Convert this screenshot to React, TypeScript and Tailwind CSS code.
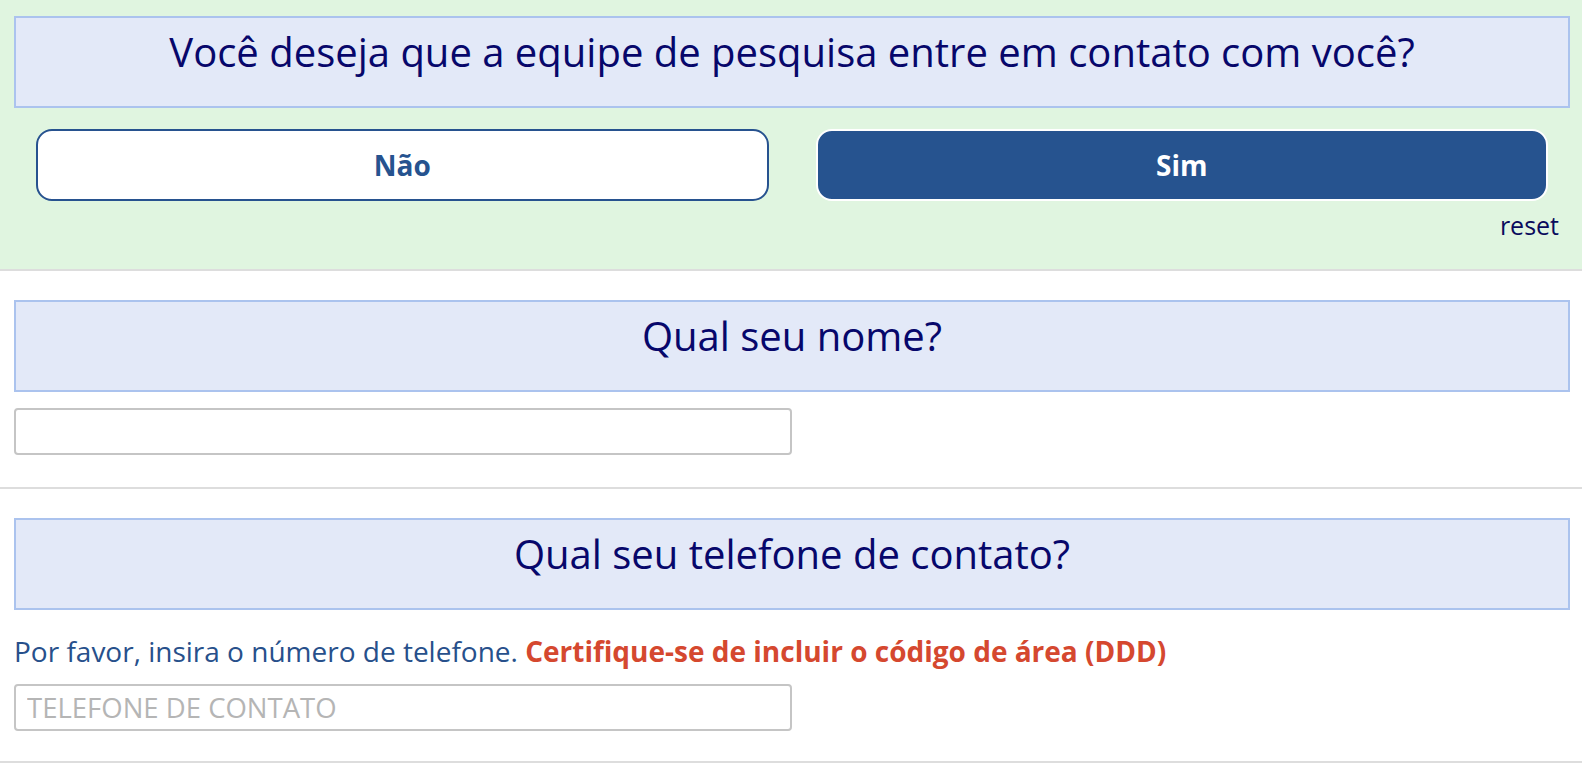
import { useState } from "react";

const font = { fontFamily: '"Open Sans", "Noto Sans", sans-serif' };

function QuestionBox({ children }: { children: React.ReactNode }) {
  return (
    <div className="border-2 border-[#abc3ee] bg-[#e3e9f8] pt-[7px] pb-[27px] text-center text-[40px] leading-[54px] text-[#07076b]">
      {children}
    </div>
  );
}

export default function App() {
  const [choice, setChoice] = useState<"nao" | "sim" | null>("sim");
  const [nome, setNome] = useState("");
  const [telefone, setTelefone] = useState("");

  return (
    <div className="min-h-screen bg-white" style={font}>
      <section className="border-b-2 border-[#dddddd] bg-[#e0f5e0] pl-[14px] pr-[12px] pt-[16px] pb-[27px]">
        <QuestionBox>Você deseja que a equipe de pesquisa entre em contato com você?</QuestionBox>
        <div className="mx-[22px] mt-[21px] grid grid-cols-2 gap-[47px]">
          <button
            onClick={() => setChoice("nao")}
            className={
              choice === "nao"
                ? "h-[72px] rounded-[16px] border-2 border-white bg-[#26538f] text-[28px] font-bold text-white"
                : "h-[72px] rounded-[16px] border-2 border-[#27528f] bg-white text-[28px] font-bold text-[#26538f]"
            }
          >
            Não
          </button>
          <button
            onClick={() => setChoice("sim")}
            className={
              choice === "sim"
                ? "h-[72px] rounded-[16px] border-2 border-white bg-[#26538f] text-[28px] font-bold text-white"
                : "h-[72px] rounded-[16px] border-2 border-[#27528f] bg-white text-[28px] font-bold text-[#26538f]"
            }
          >
            Sim
          </button>
        </div>
        <div className="mt-[8px] pr-[11px] text-right text-[25px] leading-[33px] text-[#0a0a5c]">
          <span className="cursor-pointer" onClick={() => setChoice(null)}>
            reset
          </span>
        </div>
      </section>

      <section className="border-b-2 border-[#dddddd] pl-[14px] pr-[12px] pt-[29px] pb-[32px]">
        <QuestionBox>Qual seu nome?</QuestionBox>
        <input
          value={nome}
          onChange={(e) => setNome(e.target.value)}
          className="mt-[16px] block h-[47px] w-[778px] rounded-[4px] border-2 border-[#c5c5c5] bg-white px-[11px] text-[27.5px] text-[#333] outline-none"
          style={font}
        />
      </section>

      <section className="border-b-2 border-[#dddddd] pl-[14px] pr-[12px] pt-[29px] pb-[30px]">
        <QuestionBox>Qual seu telefone de contato?</QuestionBox>
        <p className="mt-[22px] text-[28px] leading-[38px] text-[#27508b]">
          Por favor, insira o número de telefone.{" "}
          <span className="font-bold text-[#d5482f]">Certifique-se de incluir o código de área (DDD)</span>
        </p>
        <input
          value={telefone}
          onChange={(e) => setTelefone(e.target.value)}
          placeholder="TELEFONE DE CONTATO"
          className="mt-[14px] block h-[47px] w-[778px] rounded-[4px] border-2 border-[#c5c5c5] bg-white px-[11px] text-[27.5px] text-[#333] outline-none placeholder:text-[#b5b5b5]"
          style={font}
        />
      </section>
    </div>
  );
}
